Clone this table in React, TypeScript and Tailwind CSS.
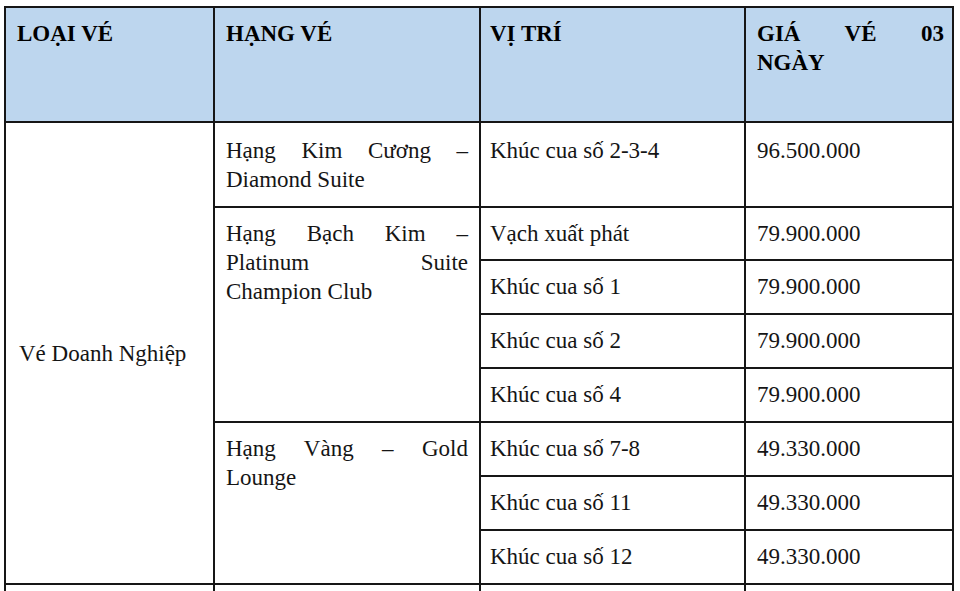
const cell = 'border-2 border-[#161616] px-[11px] pt-[11px] align-top text-justify'
const pos = 'border-2 border-[#161616] pl-[9px] pr-[11px] pt-[11px] align-top'
const price = 'border-2 border-[#161616] pl-[11px] pr-[8px] pt-[11px] align-top text-justify'

// a line that is justified edge to edge, like Word does before a wrap
const Full = ({ children }: { children: React.ReactNode }) => (
  <span className="block text-justify [text-align-last:justify]">{children}</span>
)

export default function App() {
  return (
    <div className="h-[591px] w-[960px] overflow-hidden bg-white pl-[4px] pt-[6px] font-['Liberation_Serif','Times_New_Roman',serif] text-[23px] leading-[29px] text-[#151515]">
      <table className="table-fixed border-collapse">
        <colgroup>
          <col className="w-[209px]" />
          <col className="w-[266px]" />
          <col className="w-[265px]" />
          <col className="w-[208px]" />
        </colgroup>
        <thead>
          <tr className="h-[115px] bg-[#bdd6ee] text-left font-bold text-black">
            <th className={cell}>LOẠI VÉ</th>
            <th className={cell}>HẠNG VÉ</th>
            <th className={pos}>VỊ TRÍ</th>
            <th className={price}>
              <Full>GIÁ VÉ 03</Full>
              <span className="block">NGÀY</span>
            </th>
          </tr>
        </thead>
        <tbody>
          <tr className="h-[85px]">
            <td rowSpan={8} className="border-2 border-[#161616] px-[13px] align-middle text-left">
              Vé Doanh Nghiệp
            </td>
            <td className={`${cell} pt-[13px]`}>Hạng Kim Cương – Diamond Suite</td>
            <td className={`${pos} pt-[13px]`}>Khúc cua số 2-3-4</td>
            <td className={`${price} pt-[13px]`}>96.500.000</td>
          </tr>
          <tr className="h-[53px]">
            <td rowSpan={4} className={cell}>
              <Full>Hạng Bạch Kim – Platinum Suite</Full>
              <span className="block">Champion Club</span>
            </td>
            <td className={pos}>Vạch xuất phát</td>
            <td className={price}>79.900.000</td>
          </tr>
          <tr className="h-[54px]">
            <td className={pos}>Khúc cua số 1</td>
            <td className={price}>79.900.000</td>
          </tr>
          <tr className="h-[54px]">
            <td className={pos}>Khúc cua số 2</td>
            <td className={price}>79.900.000</td>
          </tr>
          <tr className="h-[54px]">
            <td className={pos}>Khúc cua số 4</td>
            <td className={price}>79.900.000</td>
          </tr>
          <tr className="h-[54px]">
            <td rowSpan={3} className={cell}>
              Hạng Vàng – Gold Lounge
            </td>
            <td className={pos}>Khúc cua số 7-8</td>
            <td className={price}>49.330.000</td>
          </tr>
          <tr className="h-[54px]">
            <td className={pos}>Khúc cua số 11</td>
            <td className={price}>49.330.000</td>
          </tr>
          <tr className="h-[54px]">
            <td className={pos}>Khúc cua số 12</td>
            <td className={price}>49.330.000</td>
          </tr>
          <tr className="h-[54px]">
            <td className={cell}>&nbsp;</td>
            <td className={cell}>&nbsp;</td>
            <td className={pos}>&nbsp;</td>
            <td className={price}>&nbsp;</td>
          </tr>
        </tbody>
      </table>
    </div>
  )
}
